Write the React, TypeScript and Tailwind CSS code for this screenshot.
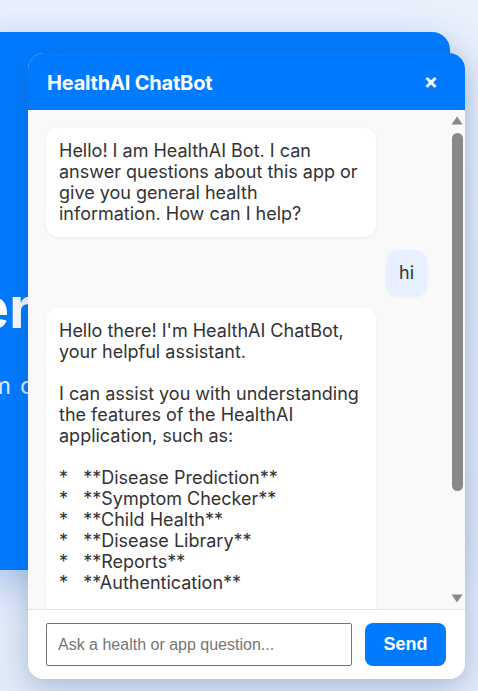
import React from "react";

const botIntro =
  "Hello! I am HealthAI Bot. I can answer questions about this app or give you general health information. How can I help?";

const botReply = `Hello there! I'm HealthAI ChatBot, your helpful assistant.

I can assist you with understanding the features of the HealthAI application, such as:

*   **Disease Prediction**
*   **Symptom Checker**
*   **Child Health**
*   **Disease Library**
*   **Reports**
*   **Authentication**

I can also provide general health information. Please remember I am not a doctor.

What would you like to know?`;

function Scrollbar() {
  return (
    <div className="w-[16px] shrink-0 bg-[#f9f9f9] flex flex-col items-center pt-[6px] pb-[6px]">
      <svg width="12" height="9" viewBox="0 0 12 9" className="shrink-0">
        <path d="M6 0.5 L11.5 8.5 L0.5 8.5 Z" fill="#888" />
      </svg>
      <div className="mt-[8px] w-[11px] h-[358px] rounded-full bg-[#888]" />
      <div className="flex-1" />
      <svg width="12" height="9" viewBox="0 0 12 9" className="shrink-0">
        <path d="M0.5 0.5 L11.5 0.5 L6 8.5 Z" fill="#888" />
      </svg>
    </div>
  );
}

export default function App() {
  return (
    <div
      className="relative w-[478px] h-[691px] overflow-hidden bg-gradient-to-b from-[#eaf1fc] to-[#e2ebf9]"
      style={{ fontFamily: "Inter, 'Noto Sans', sans-serif" }}
    >
      {/* background hero card (mostly hidden behind the chat popup) */}
      <div className="absolute left-[-40px] top-[32px] w-[490px] h-[538px] bg-[#007bff] rounded-[18px] shadow-[0_10px_40px_rgba(0,80,200,0.25)] overflow-hidden">
        <div className="absolute left-[40px] top-[230px] w-[28px] h-[180px] overflow-hidden">
          <div className="absolute right-[-4px] top-[18px] whitespace-nowrap text-right text-[56px] font-bold text-white leading-none">
            Partner
          </div>
          <div className="absolute right-[17px] top-[112px] whitespace-nowrap text-right text-[24px] text-white/85 leading-none">
            from
          </div>
          <div className="absolute left-[20px] top-[112px] whitespace-nowrap text-[24px] text-white/85 leading-none">
            c
          </div>
        </div>
      </div>

      {/* chat window */}
      <div className="absolute left-[28px] top-[53px] w-[437px] h-[626px] flex flex-col bg-white rounded-[16px] overflow-hidden shadow-[0_8px_30px_rgba(40,70,130,0.3)]">
        <div className="h-[57px] shrink-0 bg-[#007bff] flex items-center justify-between pl-[19px] pr-[27px]">
          <div className="text-[20px] font-bold text-white tracking-[-0.2px] mt-[2px]">HealthAI ChatBot</div>
          <button className="text-white text-[21px] font-bold leading-none">×</button>
        </div>

        <div className="flex-1 min-h-0 flex bg-[#f9f9f9]">
          <div className="flex-1 overflow-hidden pl-[18px] pr-[22px] pt-[18px] pb-[18px] flex flex-col gap-[12.5px]">
            <div className="w-[330px] shrink-0 bg-white rounded-[12px] px-[13px] pt-[12px] pb-[13px] text-[18px] leading-[21px] text-[#333] shadow-[0_1px_3px_rgba(0,0,0,0.06)] whitespace-pre-wrap">
              {botIntro}
            </div>
            <div className="self-end shrink-0 bg-[#e6f0ff] rounded-[12px] px-[13px] pt-[12px] pb-[13px] text-[18px] leading-[21px] text-[#333] shadow-[0_1px_3px_rgba(0,0,0,0.06)]">
              hi
            </div>
            <div className="w-[330px] shrink-0 bg-white rounded-[12px] pl-[13px] pr-[10px] pt-[12px] pb-[13px] text-[18px] leading-[21px] text-[#333] shadow-[0_1px_3px_rgba(0,0,0,0.06)] whitespace-pre-wrap">
              {botReply}
            </div>
          </div>
          <Scrollbar />
        </div>

        <div className="h-[70px] shrink-0 border-t border-[#e5e5e5] bg-white flex items-center gap-[13px] pl-[18px] pr-[19px]">
          <input
            className="flex-1 min-w-0 h-[43px] border border-[#767676] rounded-[2px] px-[11px] text-[16px] text-[#333] placeholder:text-[#757575] outline-none"
            style={{ fontFamily: "'Liberation Sans', Arial, sans-serif" }}
            placeholder="Ask a health or app question..."
          />
          <button
            className="w-[81px] shrink-0 h-[43px] bg-[#007bff] rounded-[8px] text-white text-[18px] font-bold"
            style={{ fontFamily: "'Liberation Sans', Arial, sans-serif" }}
          >
            Send
          </button>
        </div>
      </div>
    </div>
  );
}
